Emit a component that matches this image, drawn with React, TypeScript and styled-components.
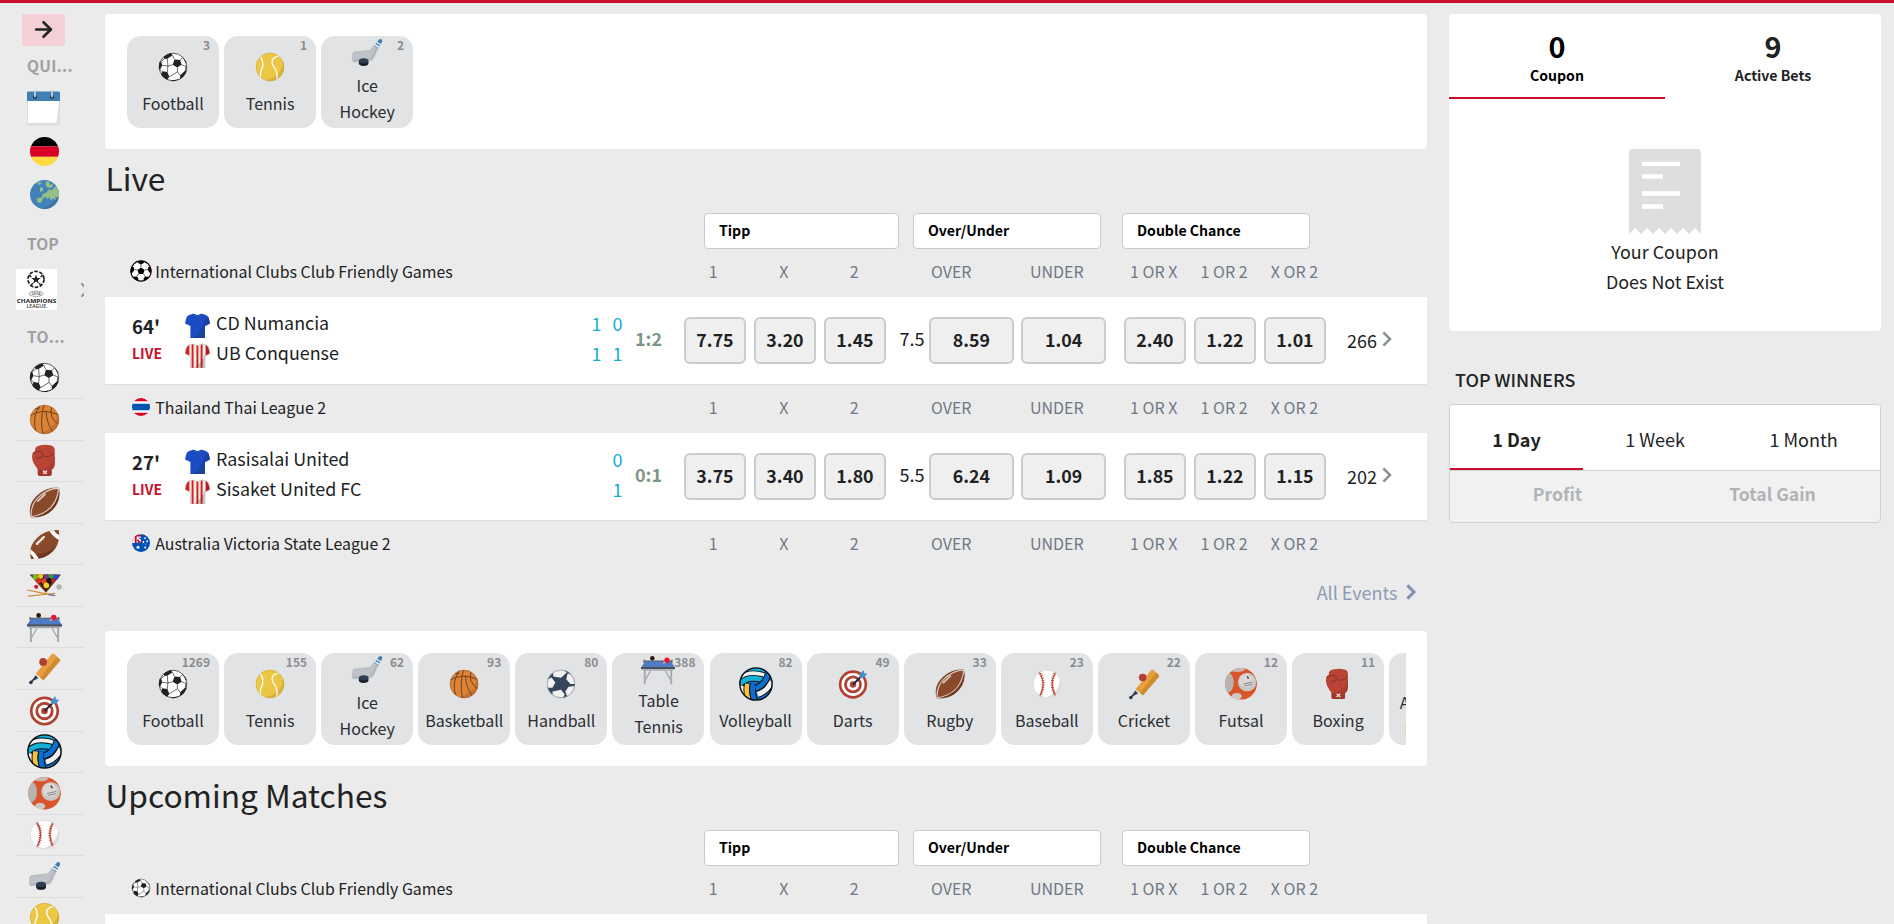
import React from 'react';
import styled, { createGlobalStyle } from 'styled-components';
import { ArrowRight } from 'lucide-react';

const RED = '#c8102e';

const GlobalStyle = createGlobalStyle`
  *, *::before, *::after { box-sizing: border-box; }
  html, body { margin: 0; background: #ebebeb; overflow: hidden; }
  body {
    font-family: 'Noto Sans CJK SC', 'Open Sans', sans-serif;
    font-size: 16px;
    color: #212223;
  }
  svg { display: block; flex: none; }
`;

/* ---------- icons ---------- */

type IconProps = { size?: number };

const Svg = ({ size = 35, children }: IconProps & { children: React.ReactNode }) => (
  <svg width={size} height={size} viewBox="0 0 36 36">
    {children}
  </svg>
);

const clip = (id: string, r = 15) => (
  <clipPath id={id}>
    <circle cx="18" cy="18" r={r} />
  </clipPath>
);

const BallIcon = ({ size, ink, id }: IconProps & { ink: string; id: string }) => (
  <Svg size={size}>
    {clip(id)}
    <circle cx="18" cy="18" r="15" fill="#fff" />
    <g clipPath={`url(#${id})`}>
      <path d="M26 31 Q33 24 32 12 L36 20 L30 34 L14 34 Q22 34 26 31" fill="#d9dadb" />
      <g fill={ink}>
        <path d="M19.5 10 L25.5 10.6 L27.2 15.6 L22.5 18.6 L17.7 15.6z" />
        <path d="M8 7 L15.5 3 L17.5 5.6 L12 9.2 L9 9.6z" />
        <path d="M2 13 L5.4 11.8 L6.6 16.2 L4.4 20.6 L2 21z" />
        <path d="M6.4 22.6 L12 23.4 L14.2 28.4 L11.6 32 L5 28z" />
        <path d="M25.6 26.8 L31 21.6 L34 22 L30 31 L25.4 31z" />
        <path d="M16 32.2 L22 31.6 L21 34 L15 34z" />
        <path d="M28.5 8 L33 13 L31.6 14z" />
      </g>
      <g stroke={ink} strokeWidth=".7" fill="none">
        <path d="M19.5 10 L17.5 5.6 M25.5 10.6 L28.6 8 M27.2 15.6 L31.6 17.4 L31 21.6 M22.5 18.6 L22.8 23 L25.6 26.8 M17.7 15.6 L12.6 17 L12 23.4 M12.6 17 L6.6 16.2 M12 9.2 L12.6 17 M22.8 23 L14.2 28.4 M25.4 31 L22 31.6 M9 9.6 L5.4 11.8 M4.4 20.6 L6.4 22.6" />
      </g>
    </g>
    <circle cx="18" cy="18" r="14.6" fill="none" stroke={ink} strokeWidth=".8" />
  </Svg>
);

const Football = ({ size }: IconProps) => <BallIcon size={size} ink="#222" id="fb" />;

const Handball = ({ size }: IconProps) => (
  <Svg size={size}>
    {clip('hb')}
    <g clipPath="url(#hb)">
      <circle cx="18" cy="18" r="15" fill="#35465a" />
      <g fill="#f1f1f1">
        <path d="M9 3 L20 2 L24 6 L18 11.5 L10 10z" />
        <path d="M2 14 L8 11 L12 16.5 L9 22 L2 22z" />
        <path d="M25 7 L32 9 L33 18 L28 18 L23.5 13z" />
        <path d="M26 21 L33 20 L31 28 L25 32 L22.5 26z" />
        <path d="M9 26 L18 24 L22 29 L19 34 L9 33z" />
      </g>
    </g>
    <circle cx="18" cy="18" r="14.6" fill="none" stroke="#8d949b" strokeWidth=".8" />
  </Svg>
);

const ClassicBall = ({ size }: IconProps) => (
  <Svg size={size}>
    {clip('cb', 17)}
    <circle cx="18" cy="18" r="16.6" fill="#fff" stroke="#000" strokeWidth="1.8" />
    <g clipPath="url(#cb)" fill="#000">
      <path d="M18 12.2 L23.8 16.5 L21.6 23 L14.4 23 L12.2 16.5z" />
      <path d="M11.5 1 L24.5 1 L22.5 5 L18 7.4 L13.5 5z" />
      <path d="M1 11 L6 11.5 L7 16.5 L4 21 L0 21z" />
      <path d="M35 11 L30 11.5 L29 16.5 L32 21 L36 21z" />
      <path d="M6 27.5 L11.5 27 L14 31 L12.5 35 L5 32z" />
      <path d="M30 27.5 L24.5 27 L22 31 L23.5 35 L31 32z" />
      <path d="M18 7 V12 M24 16.3 L29 15.5 M22 23 L25 27 M14 23 L11 27 M12 16.3 L7 15.5" stroke="#000" strokeWidth="1" />
    </g>
  </Svg>
);

const Basketball = ({ size }: IconProps) => (
  <Svg size={size}>
    {clip('bk')}
    <g clipPath="url(#bk)">
      <circle cx="18" cy="18" r="15" fill="#dc8338" />
      <path d="M32 10 Q31 26 14 32 L24 36 L36 26 L35 12z" fill="#c37232" />
      <g fill="none" stroke="#6b3f1d" strokeWidth="1">
        <path d="M3 14 Q16 6 32 13" />
        <path d="M8 6 Q14 10 12 3" />
        <path d="M12 5 Q5 17 9.5 31" />
        <path d="M17.5 3 Q13 18 16.5 33" />
        <path d="M19.5 9 Q20 22 27 31" />
        <path d="M25.5 5 Q22 16 32.5 23" />
      </g>
    </g>
    <circle cx="18" cy="18" r="14.7" fill="none" stroke="#a9622a" strokeWidth=".6" />
  </Svg>
);

const Tennis = ({ size }: IconProps) => (
  <Svg size={size}>
    {clip('tn')}
    <g clipPath="url(#tn)">
      <circle cx="18" cy="18" r="15" fill="#ecc645" />
      <path d="M32 12 Q31 27 14 32 L24 36 L36 26z" fill="#d8b23c" />
      <path d="M6.5 5 Q13 13 9 21 Q6.5 27 9 33" fill="none" stroke="#fff" strokeWidth="1.4" />
      <path d="M29 6 Q17.5 8 21 16 Q28 25 24.5 33" fill="none" stroke="#fff" strokeWidth="1.4" />
    </g>
    <circle cx="18" cy="18" r="14.7" fill="none" stroke="#cba93b" strokeWidth=".6" />
  </Svg>
);

const Hockey = ({ size }: IconProps) => (
  <Svg size={size}>
    <path d="M3 19 Q3 17 5.5 17 L19 15.5 Q22 15.2 23 13.5 L25.5 10 L30 12.5 L25 23.5 Q24 26 21 26 L4 27.5 Q2.4 27.6 2.5 25z" fill="#bfc3c9" stroke="#a8adb3" strokeWidth=".6" />
    <path d="M4 25.6 L21 24.1 Q23 23.6 24 21.6 L28.8 12.4" fill="none" stroke="#adb1b8" strokeWidth="1.2" />
    <path d="M25.4 10.2 L30.8 3.6 Q32 2.6 33.2 3.4 Q34.6 4 34 6 L30 13z" fill="#3c7db5" />
    <path d="M26.8 8.4 L31.6 11 L30.7 12.6 L25.6 9.9z M28.6 6.2 L32.8 8.6 L32.2 9.8 L27.8 7.3z" fill="#e8eef3" />
    <path d="M9.4 26 V29 Q9.6 31.6 14.4 31.7 Q19.4 31.6 19.5 29 V26z" fill="#17202c" />
    <ellipse cx="14.5" cy="26.2" rx="5" ry="2.7" fill="#2f3d50" />
  </Svg>
);

const Boxing = ({ size }: IconProps) => (
  <Svg size={size}>
    <path d="M11 25 H25.5 V32 Q25.5 34 23.5 34 H13 Q11 34 11 32z" fill="#a1372b" />
    <path d="M10 3.5 Q14 1.5 22 2 Q28.5 2.4 28.5 7 V20 Q28.5 26.5 25 27.5 H11.5 Q5 20 5.2 14 Q5.5 9 8.2 8.4 Q8 5 10 3.5z" fill="#b94435" />
    <path d="M28.4 13 Q26 24 15 27.5 H25 Q28.5 26.5 28.5 20z" fill="#a93d30" />
    <path d="M5.8 11 Q10 8 14.2 9 Q17.6 10.6 15.8 14 Q13 16.4 9.8 15 M17.5 13.6 Q25 15 28 10" fill="none" stroke="#7c2b22" strokeWidth=".9" />
    <path d="M16.5 28.4 l4 3.4 m0 -3.4 l-4 3.4" stroke="#f4d9d4" strokeWidth="1.4" />
  </Svg>
);

const Rugby = ({ size }: IconProps) => (
  <Svg size={size}>
    <path d="M32.6 3 Q35 16 26.5 25 Q18 34 4 32.8 Q1 20 10 11.5 Q19 2.4 32.6 3z" fill="#884a2a" stroke="#63341c" strokeWidth=".7" />
    <path d="M32.6 3 Q35 16 26.5 25 Q18 34 4 32.8 Q22 28 27 19 Q31 12 32.6 3z" fill="#70391f" />
    <path d="M32.4 3.2 Q32 14 25 22.5 Q17 31 4.2 32.6 Q3.6 20 12.5 12 Q21 4 32.4 3.2z" fill="none" stroke="#e5d7cd" strokeWidth="1.1" />
    <path d="M10.5 17 L19 9" stroke="#dccabe" strokeWidth="1.8" />
  </Svg>
);

const AmericanFootball = ({ size }: IconProps) => (
  <Svg size={size}>
    <clipPath id="af">
      <path d="M32.6 3 Q35 16 26.5 25 Q18 34 4 32.8 Q1 20 10 11.5 Q19 2.4 32.6 3z" />
    </clipPath>
    <g clipPath="url(#af)">
      <rect width="36" height="36" fill="#884a2a" />
      <path d="M34 14 Q28 26 10 28 L12 36 L36 30z" fill="#70391f" />
      <path d="M22 2 Q25 9 34.5 14.5 L34 9 Q29 7 27 2z M1 21 Q8 25 13 33.5 L8 34 Q6 29 2 27z" fill="#fff" />
    </g>
    <path d="M9.5 18 L18 9.6" stroke="#fff" strokeWidth="2" />
    <path d="M9 15.6 l3 3 M11.6 13 l3 3 M14.2 10.4 l3 3" stroke="#d9c5b8" strokeWidth=".8" />
  </Svg>
);

const Billiards = ({ size }: IconProps) => (
  <Svg size={size}>
    <path d="M2.6 6.6 H35 L19.5 25.4z" fill="#5b3114" />
    <path d="M6.5 8 H31.5 L19.4 22.5z" fill="#2c1a10" />
    <circle cx="8.6" cy="9.3" r="2.8" fill="#7fb82c" />
    <circle cx="14" cy="8.6" r="2.6" fill="#e9c71c" />
    <circle cx="20" cy="8.8" r="2.7" fill="#6d3c88" />
    <circle cx="25" cy="8.8" r="2.6" fill="#3f9c3c" />
    <circle cx="29.6" cy="9.2" r="2.8" fill="#2d49c9" />
    <circle cx="12" cy="13.2" r="2.7" fill="#e02c20" />
    <circle cx="17.4" cy="13.6" r="2.8" fill="#e54420" />
    <circle cx="23" cy="13" r="2.6" fill="#141414" />
    <circle cx="26.8" cy="13" r="2.2" fill="#c82020" />
    <circle cx="19.8" cy="17.8" r="2.9" fill="#eed22a" />
    <circle cx="9.5" cy="19.4" r="2.1" fill="#dd1f2b" />
    <circle cx="33" cy="19.6" r="2.8" fill="#b5b5b5" />
    <path d="M0 22.6 L15 25.6 L28 28" stroke="#d8892a" strokeWidth="1.2" fill="none" />
    <path d="M1 29 L29 26" stroke="#c98e45" strokeWidth="1.2" />
    <path d="M22 27.4 L29 28.4" stroke="#6b6cae" strokeWidth="1.2" />
  </Svg>
);

const TableTennis = ({ size }: IconProps) => (
  <Svg size={size}>
    <path d="M4 18 V33 M32 18 V33" stroke="#a5a8ac" strokeWidth="2" />
    <path d="M5 28 L10 19 M31 28 L26 19" stroke="#a5a8ac" strokeWidth="1.4" />
    <path d="M4.5 8.5 H31.5 L36 15.5 H0z" fill="#4f7cc4" />
    <path d="M3 8.5 H33" stroke="#5b6470" strokeWidth="1.2" />
    <path d="M3.2 7.2 V10.5 M32.8 7.2 V10.5" stroke="#444" strokeWidth="1" />
    <rect y="14.8" width="36" height="2.3" fill="#4a515e" />
    <path d="M2 18 H34" stroke="#a5a8ac" strokeWidth="1.4" />
    <circle cx="12" cy="5.6" r="2.4" fill="#2a1512" />
    <circle cx="27.5" cy="7.6" r="2.8" fill="#ee1238" />
    <path d="M25.6 9.4 L23.6 11" stroke="#e9a7a0" strokeWidth="1.4" />
    <circle cx="19" cy="5.3" r="1" fill="#f2dc92" />
  </Svg>
);

const Cricket = ({ size }: IconProps) => (
  <Svg size={size}>
    <path d="M9 23.5 L25.6 3.2 Q26.6 2 28 3.2 L33.6 8.4 Q34.6 9.4 33.6 10.6 L17 30z" fill="#e8a03c" />
    <path d="M30.8 5.8 L33.6 8.4 Q34.6 9.4 33.6 10.6 L17 30 L13.8 27.4z" fill="#cf8b30" />
    <path d="M9 25 L11.6 28 L6.6 30.6 L4.8 33.6 L2.4 32 L5.4 29.6z" fill="#2f3f52" />
    <circle cx="4" cy="32.4" r="1.8" fill="#24384c" />
    <circle cx="16.6" cy="11.2" r="4" fill="#b23f33" />
  </Svg>
);

const Darts = ({ size }: IconProps) => (
  <Svg size={size}>
    <circle cx="18" cy="18.5" r="15" fill="#b04133" />
    <circle cx="18" cy="18.5" r="12.2" fill="#fff" />
    <circle cx="18" cy="18.5" r="9.4" fill="#b04133" />
    <circle cx="18" cy="18.5" r="6.5" fill="#fff" />
    <circle cx="18" cy="18.5" r="3.4" fill="#b04133" />
    <path d="M18 18.5 L27 9.6" stroke="#1d2733" strokeWidth="2" />
    <path d="M24.6 10.6 L25.8 6.4 L29.4 3.4 L29.8 6.6 L33.2 7 L30 10.8 L26 11.8z" fill="#4491d0" />
  </Svg>
);

const VOLLEY_BANDS: [string, string][] = [
  ['M9 3 Q20 1 32 9', '#13b1da'],
  ['M2 11.5 Q13 3.5 30 10.5', '#efefef'],
  ['M1 18 Q9 9 25 13.5', '#13b1da'],
  ['M3.5 20 Q1.5 26 4 33', '#efefef'],
  ['M9 18 Q7 26 10.5 36', '#f8c33c'],
  ['M15 18 Q13 27 17 37', '#0a6fd0'],
  ['M21 34.6 Q31 32 36 22', '#0a6fd0'],
  ['M19.5 29 Q30 26 34.5 15', '#efefef'],
  ['M17.5 22.6 Q27 20 31 7.5', '#0a6fd0'],
];

const Volleyball = ({ size }: IconProps) => (
  <Svg size={size}>
    {clip('vb', 17)}
    <g clipPath="url(#vb)" fill="none">
      <circle cx="18" cy="18" r="17" fill="#0a6fd0" />
      {VOLLEY_BANDS.map(([d, color]) => (
        <g key={d}>
          <path d={d} stroke="#0a0a0a" strokeWidth="7.2" />
          <path d={d} stroke={color} strokeWidth="5.2" />
        </g>
      ))}
    </g>
    <circle cx="18" cy="18" r="17.1" fill="none" stroke="#0a0a0a" strokeWidth="1.5" />
  </Svg>
);

const Futsal = ({ size }: IconProps) => (
  <Svg size={size}>
    {clip('fs', 17)}
    <g clipPath="url(#fs)">
      <circle cx="18" cy="17.5" r="17" fill="#d9532b" />
      <ellipse cx="4.5" cy="16.5" rx="5.8" ry="10.5" fill="#b9b3af" />
      <circle cx="24.5" cy="16" r="9.8" fill="#c9c5c2" />
      <circle cx="23.5" cy="14.6" r="7.2" fill="#dbd8d6" />
      <ellipse cx="14" cy="2.4" rx="8" ry="3" fill="#cbb9b1" />
      <ellipse cx="13.5" cy="31" rx="5.2" ry="3.6" fill="#cfc9c5" />
      <path d="M30 33 L35 27" stroke="#c6bcb6" strokeWidth="4" />
      <path d="M20.5 18 L30 16 M21.4 20 L29.6 18.2" stroke="#8b8590" strokeWidth="1.1" />
      <path d="M24.6 10 L26 12.4" stroke="#443f55" strokeWidth="1.6" />
    </g>
  </Svg>
);

const Baseball = ({ size }: IconProps) => (
  <Svg size={size}>
    {clip('bs')}
    <g clipPath="url(#bs)">
      <circle cx="18" cy="18" r="15" fill="#fff" />
      <path d="M32 14 Q30 27 18 32 L26 36 L36 26z" fill="#e0e0e0" />
      <g fill="none" stroke="#bf4238">
        <path d="M9.5 5 Q18 17 10 31.5 M27.5 5 Q19.5 17 27.5 31.5" strokeWidth="1.2" />
        <path d="M9.5 5 Q18 17 10 31.5 M27.5 5 Q19.5 17 27.5 31.5" strokeWidth="3" strokeDasharray="1 1.4" />
      </g>
    </g>
    <circle cx="18" cy="18" r="14.7" fill="none" stroke="#cfcfcf" strokeWidth=".7" />
  </Svg>
);

const Calendar = () => (
  <svg width="33" height="36" viewBox="0 0 33 36">
    <path d="M0 2 H33 V34 Q33 35.5 31.5 35.5 H1.5 Q0 35.5 0 34z" fill="#dcdcdc" />
    <path d="M1 11 H32 V14 L29.5 33 H1z" fill="#fff" />
    <path d="M0 3 Q0 1.6 1.5 1.6 H31.5 Q33 1.6 33 3 V11 H0z" fill="#4080b5" />
    <circle cx="8" cy="7" r="2" fill="#26364a" />
    <circle cx="25" cy="7" r="2" fill="#26364a" />
    <path d="M8 0.5 V6.6 M25 0.5 V6.6" stroke="#c9ced2" strokeWidth="1.8" strokeLinecap="round" />
  </svg>
);

const Germany = () => (
  <svg width="29" height="29" viewBox="0 0 29 29">
    <clipPath id="de"><circle cx="14.5" cy="14.5" r="14.5" /></clipPath>
    <g clipPath="url(#de)">
      <rect width="29" height="9.4" fill="#000" />
      <rect y="9.4" width="29" height="10.4" fill="#d80027" />
      <rect y="19.8" width="29" height="9.4" fill="#ffda44" />
    </g>
  </svg>
);

const Globe = () => (
  <svg width="29" height="29" viewBox="0 0 29 29">
    <clipPath id="gl"><circle cx="14.5" cy="14.5" r="14.5" /></clipPath>
    <g clipPath="url(#gl)">
      <rect width="29" height="29" fill="#4183b8" />
      <path d="M29 10 Q28 24 10 29 H29z" fill="#3a76a8" />
      <g fill="#96bf85">
        <path d="M7 3 L10 1.5 L11.5 3.5 L9 5z M10 7.5 L12.5 7 L13.4 10.5 L10 12z M15.5 2 L19 1 L20 5 L22.5 3.4 L23 7 L18.5 8 L16 6z" />
        <path d="M6.5 18.6 L11.6 17.4 L13 14 L17 12.2 L18 9.4 L22 10 L26 6 L29 11 V17.5 L25 17 L26 20 L23 18.4 L21 20.4 L19 16.4 L18 19.4 L15.4 16.4 L12.8 18.6 L12 22 L8 23z" />
      </g>
    </g>
  </svg>
);

const ChampionsLeague = () => (
  <svg width="41" height="41" viewBox="0 0 41 41">
    <rect width="41" height="41" fill="#fff" />
    <circle cx="20" cy="10.3" r="8" fill="none" stroke="#222" strokeWidth="1.8" strokeDasharray="3.6 1.5" />
    <path d="M20 5.6 L21.2 9 L24.8 9 L21.9 11.2 L23 14.8 L20 12.6 L17 14.8 L18.1 11.2 L15.2 9 L18.8 9z" fill="#222" />
    <path d="M13 6 L15.5 8 M27 6 L24.5 8 M15 17 L16.6 14 M25 17 L23.4 14" stroke="#222" strokeWidth="1.4" />
    <ellipse cx="20" cy="24.8" rx="7" ry="2.6" fill="none" stroke="#666" strokeWidth=".6" />
    <text x="20" y="26.3" fontSize="4" fontWeight="600" fontStyle="italic" textAnchor="middle" fill="#555" fontFamily="Open Sans, sans-serif">UEFA</text>
    <text x="20.5" y="33.8" fontSize="6" fontWeight="700" textAnchor="middle" textLength="39.5" lengthAdjust="spacingAndGlyphs" fill="#222" fontFamily="Open Sans, sans-serif">CHAMPIONS</text>
    <text x="21" y="38.5" fontSize="4.6" fontWeight="600" textAnchor="middle" textLength="21" lengthAdjust="spacingAndGlyphs" fill="#333" fontFamily="Open Sans, sans-serif">LEAGUE.</text>
  </svg>
);

const Thailand = () => (
  <svg width="18" height="18" viewBox="0 0 18 18">
    <clipPath id="th"><circle cx="9" cy="9" r="9" /></clipPath>
    <g clipPath="url(#th)">
      <rect width="18" height="18" fill="#f4f4f4" />
      <rect width="18" height="3.2" fill="#d80027" />
      <rect y="5.8" width="18" height="6.4" fill="#0052b4" />
      <rect y="14.8" width="18" height="3.2" fill="#d80027" />
    </g>
  </svg>
);

const Australia = () => (
  <svg width="18" height="18" viewBox="0 0 18 18">
    <clipPath id="au"><circle cx="9" cy="9" r="9" /></clipPath>
    <g clipPath="url(#au)">
      <rect width="18" height="18" fill="#0052b4" />
      <path d="M0 0 H9 V9 H0z" fill="#eff0f3" />
      <path d="M9 2.6 H4.6 V9 H2.8 V2 Q6 -1 9 .8z M5.6 5 L9.4 8.6 L8.4 9.4 L5 6.4z" fill="#d80027" />
      <path d="M6.2 3.8 H9 V5.6z M5.6 7 L7.6 9 H5.6z" fill="#0052b4" />
      <g fill="#fff">
        <circle cx="6" cy="13.2" r="1.5" />
        <circle cx="13" cy="4.2" r=".9" />
        <circle cx="11.4" cy="8" r=".9" />
        <circle cx="15.2" cy="7.2" r=".9" />
        <circle cx="13.2" cy="13.6" r="1" />
        <circle cx="14" cy="10" r=".5" />
      </g>
    </g>
  </svg>
);

const SHIRT = 'M7.5 1 Q12.5 4 17.5 1 L21 2 Q23.5 3 24 6 L25 10.6 L20 13 V25 H5.4 V13 L0 10.6 L1 6 Q1.6 3 4 2z';

const BlueShirt = () => (
  <svg width="25" height="25" viewBox="0 0 25 25">
    <path d={SHIRT} fill="#1b4cc4" />
    <path d="M19.6 7 Q18 18 8 25 H20 V13 L25 10.6 L23.4 4z" fill="#1d419e" />
    <path d="M7.5 1 Q12.5 4 17.5 1" fill="none" stroke="#143a94" strokeWidth="1" />
  </svg>
);

const StripedShirt = () => (
  <svg width="25" height="25" viewBox="0 0 25 25">
    <clipPath id="sh"><path d={SHIRT} /></clipPath>
    <g clipPath="url(#sh)">
      <rect width="25" height="25" fill="#f5f3f2" />
      <path d="M0 0 H4.4 V13 H0z M6.6 0 H8.6 V25 H6.6z M11.4 0 H13.4 V25 H11.4z M15.6 0 H17.6 V25 H15.6z" fill="#d8221f" />
      <path d="M20.6 0 H25 V13 H20.6z" fill="#b31d22" />
      <path d="M19.6 10 Q18 19 9 25 H20.4z" fill="#4a2020" opacity=".22" />
    </g>
    <path d={SHIRT} fill="none" stroke="#b9a8a6" strokeWidth=".5" />
  </svg>
);

const Receipt = () => (
  <svg width="72" height="85" viewBox="0 0 72 85">
    <path d="M4 0 H68 Q72 0 72 4 V85 L66 79 L60 85 L54 79 L48 85 L42 79 L36 85 L30 79 L24 85 L18 79 L12 85 L6 79 L0 85 V4 Q0 0 4 0z" fill="#dedede" />
    <path d="M13 12.7 H51 V17 H13z M13 25.2 H34 V29.8 H13z M13 42.2 H51 V46.8 H13z M13 55.2 H34 V59.8 H13z" fill="#fff" />
  </svg>
);

const Chevron = ({ color, w = 2.6 }: { color: string; w?: number }) => (
  <svg width="10" height="16" viewBox="0 0 10 16">
    <path d="M1.4 1.4 L8 8 L1.4 14.6" fill="none" stroke={color} strokeWidth={w} />
  </svg>
);

/* ---------- page ---------- */

const Page = styled.div`
  height: 924px;
  border-top: 3px solid ${RED};
  display: flex;
  align-items: flex-start;
  overflow: hidden;
`;

const Sidebar = styled.aside`
  width: 84px;
  height: 921px;
  padding: 11px 0 0 16px;
  overflow: hidden;
  flex: none;
`;

const ExpandButton = styled.button`
  display: flex;
  align-items: center;
  justify-content: center;
  width: 43px;
  height: 32px;
  margin: 0 0 0 6px;
  padding: 0 1px 2px 0;
  border: 0;
  border-radius: 3px;
  background: #f5cfd6;
  color: #212223;
`;

const SideLabel = styled.div<{ $top: number; $bottom: number; $spread?: boolean }>`
  margin: ${p => p.$top}px 0 ${p => p.$bottom}px 11px;
  font-size: 15.6px;
  font-weight: 700;
  line-height: 24px;
  letter-spacing: ${p => (p.$spread ? '0.3px' : 'normal')};
  color: #a0a0a0;
  white-space: nowrap;
`;

const QuickLinks = styled.div`
  width: 56px;
  display: flex;
  flex-direction: column;
  align-items: center;
  gap: 14px;

  & > :first-child { margin: 0 1px -3px 0; }
`;

const TopLeague = styled.div`
  display: flex;
  align-items: center;
  gap: 23px;
`;

const SportRow = styled.div`
  height: 41.55px;
  padding-left: 11px;
  display: flex;
  align-items: center;
  border-bottom: 1px solid #dbdce2;
`;

const Main = styled.main`
  width: 1322px;
  margin: 11px 0 0 21px;
  flex: none;
`;

const TileCard = styled.section`
  height: 135px;
  padding: 22px 21px 0 22px;
  background: #fff;
  border-radius: 4px;
`;

const TileStrip = styled.div`
  display: flex;
  gap: 5.1px;
  overflow: hidden;
`;

const Tile = styled.div<{ $inset: number }>`
  position: relative;
  flex: none;
  width: 92px;
  height: 91.5px;
  padding-top: ${p => p.$inset}px;
  display: flex;
  flex-direction: column;
  align-items: center;
  border-radius: 14px;
  background: #e2e3e5;
`;

const TileCount = styled.span`
  position: absolute;
  top: 1px;
  right: 9px;
  font-size: 12px;
  font-weight: 700;
  line-height: 16px;
  color: #8b8d90;
`;

const TileLabel = styled.span<{ $gap: number }>`
  margin-top: ${p => p.$gap}px;
  line-height: 26px;
  text-align: center;
  white-space: pre;
  color: #2b2d30;
`;

const Title = styled.h2`
  margin: 0;
  height: 64px;
  padding: 4px 0 0 0.5px;
  font-size: 31.7px;
  font-weight: 400;
  line-height: 48px;
`;

const MarketBar = styled.div`
  display: flex;
  padding-left: 599px;
`;

const MarketSelect = styled.div<{ $w: number; $gap: number }>`
  width: ${p => p.$w}px;
  height: 36px;
  margin-right: ${p => p.$gap}px;
  padding-left: 14px;
  border: 1px solid #c8cacc;
  border-radius: 4px;
  background: #fff;
  color: #000;
  font-size: 14.1px;
  font-weight: 700;
  line-height: 32px;
`;

const LeagueRow = styled.div`
  display: flex;
  align-items: center;
  height: 48px;
  padding-bottom: 4px;
`;

const LeagueIcon = styled.span`
  width: 24px;
  margin-left: 23.5px;
  display: flex;
  justify-content: center;
`;

const LeagueName = styled.span`
  width: 525.5px;
  padding: 1px 0 0 2.8px;
  font-size: 15.9px;
  line-height: 25px;
`;

const Outcomes = styled.div<{ $cell: number; $n: number; $gap: number }>`
  display: grid;
  grid-template-columns: repeat(${p => p.$n}, ${p => p.$cell}px);
  margin-right: ${p => p.$gap}px;
  line-height: 24px;
  text-align: center;
  color: #6f7985;
`;

const MatchRow = styled.div`
  display: grid;
  grid-template-columns: 53px 401px 21px 21px 56px 202px 43px 177px 18px 202px auto;
  align-items: center;
  height: 88px;
  padding-left: 27px;
  background: #fff;
  border-bottom: 1px solid #dcdde0;
`;

const Clock = styled.div`
  display: flex;
  flex-direction: column;
  margin-top: -3px;
  font-size: 18.6px;
  font-weight: 700;
  line-height: 28px;
`;

const LiveTag = styled.span`
  font-size: 14px;
  line-height: 26px;
  color: ${RED};
`;

const Teams = styled.div`
  display: flex;
  flex-direction: column;
  margin-top: -5px;
`;

const Team = styled.div`
  display: flex;
  align-items: center;
  gap: 6px;
  height: 30px;
  font-size: 17.9px;
  line-height: 30px;
`;

const TeamName = styled.span`
  padding-bottom: 1.5px;
`;

const ShirtBox = styled.span`
  display: flex;
  padding-top: 4px;
`;

const Period = styled.div`
  margin-top: -5px;
  font-size: 18px;
  line-height: 30px;
  text-align: center;
  color: #14aed0;
  white-space: pre;
`;

const Total = styled.div`
  padding: 0 0 5px 7px;
  font-size: 18px;
  font-weight: 700;
  line-height: 30px;
  color: #7f9684;
`;

const Odds = styled.div<{ $n: number; $gap: number }>`
  display: grid;
  grid-template-columns: repeat(${p => p.$n}, 1fr);
  gap: ${p => p.$gap}px;
`;

const Odd = styled.button`
  height: 47px;
  padding: 0 0 3px;
  border: 2px solid #c9cdce;
  border-radius: 6px;
  background: #efefef;
  color: #212223;
  font: 700 17.8px/38px 'Noto Sans CJK SC', sans-serif;
  text-align: center;
`;

const LineValue = styled.div`
  padding: 0 4.5px 5px 0;
  font-size: 18px;
  line-height: 30px;
  text-align: right;
`;

const More = styled.div`
  display: flex;
  align-items: center;
  gap: 5px;
  padding: 0 0 2px 21px;
  font-size: 18px;
  line-height: 30px;
`;

const MoreChevron = styled.span`
  display: flex;
  padding-bottom: 1px;
`;

const AllEvents = styled.div`
  display: flex;
  align-items: center;
  justify-content: flex-end;
  gap: 8px;
  height: 62px;
  padding: 0 11.5px 16px 0;
  font-size: 18px;
  line-height: 30px;
  color: #8e9bb3;
`;

const Right = styled.aside`
  width: 432px;
  margin: 11px 0 0 22px;
  flex: none;
`;

const CouponCard = styled.section`
  height: 317px;
  border-radius: 4px;
  background: #fff;
  overflow: hidden;
`;

const CouponTabs = styled.div`
  display: flex;
`;

const CouponTab = styled.div<{ $active?: boolean }>`
  flex: 1;
  height: 85px;
  padding-top: 13.5px;
  display: flex;
  flex-direction: column;
  align-items: center;
  border-bottom: 2px solid ${p => (p.$active ? RED : 'transparent')};
  color: ${p => (p.$active ? '#000' : '#212223')};
`;

const CouponCount = styled.span`
  font-size: 28.8px;
  font-weight: 700;
  line-height: 36px;
`;

const CouponLabel = styled.span`
  font-size: 14.1px;
  font-weight: 700;
  line-height: 23px;
`;

const CouponEmpty = styled.div`
  padding-top: 50px;
  display: flex;
  flex-direction: column;
  align-items: center;
  font-size: 17.9px;
  line-height: 30px;
`;

const EmptyText = styled.p`
  margin: 1.5px 0 0;
  text-align: center;
`;

const WinnersTitle = styled.h3`
  margin: 33px 0 10px 6px;
  font-size: 17.9px;
  font-weight: 500;
  line-height: 30px;
`;

const WinnersCard = styled.section`
  height: 119px;
  border: 1px solid #cfd0d1;
  border-radius: 4px;
  background: #f1f1f1;
  overflow: hidden;
`;

const RangeTabs = styled.div`
  display: grid;
  grid-template-columns: 133px 144px 1fr;
  height: 66px;
  background: #fff;
  border-bottom: 1px solid #cfd0d1;
`;

const RangeTab = styled.div<{ $active?: boolean }>`
  padding-top: 19px;
  font-size: 18px;
  font-weight: ${p => (p.$active ? 700 : 400)};
  line-height: 30px;
  text-align: center;
  border-bottom: 2px solid ${p => (p.$active ? RED : 'transparent')};
`;

const WinnersHead = styled.div`
  display: grid;
  grid-template-columns: 1fr 1fr;
  padding-top: 8px;
  font-size: 17.6px;
  font-weight: 700;
  line-height: 30px;
  text-align: center;
  color: #b0b4b8;
`;

/* ---------- data ---------- */

type Icon = React.ComponentType<IconProps>;
type Sport = { icon: Icon; label: string; count: number };

const liveSports: Sport[] = [
  { icon: Football, label: 'Football', count: 3 },
  { icon: Tennis, label: 'Tennis', count: 1 },
  { icon: Hockey, label: 'Ice\nHockey', count: 2 },
];

const allSports: Sport[] = [
  { icon: Football, label: 'Football', count: 1269 },
  { icon: Tennis, label: 'Tennis', count: 155 },
  { icon: Hockey, label: 'Ice\nHockey', count: 62 },
  { icon: Basketball, label: 'Basketball', count: 93 },
  { icon: Handball, label: 'Handball', count: 80 },
  { icon: TableTennis, label: 'Table\nTennis', count: 388 },
  { icon: Volleyball, label: 'Volleyball', count: 82 },
  { icon: Darts, label: 'Darts', count: 49 },
  { icon: Rugby, label: 'Rugby', count: 33 },
  { icon: Baseball, label: 'Baseball', count: 23 },
  { icon: Cricket, label: 'Cricket', count: 22 },
  { icon: Futsal, label: 'Futsal', count: 12 },
  { icon: Boxing, label: 'Boxing', count: 11 },
  { icon: AmericanFootball, label: 'American\nFootball', count: 9 },
];

const sideSports: Icon[] = [
  Football, Basketball, Boxing, Rugby, AmericanFootball, Billiards, TableTennis,
  Cricket, Darts, Volleyball, Futsal, Baseball, Hockey, Tennis,
];

type MatchData = {
  minute: string; home: string; away: string; periods: string[]; total: string;
  tipp: string[]; line: string; ou: string[]; dc: string[]; more: number;
};

const matches: MatchData[] = [
  { minute: "64'", home: 'CD Numancia', away: 'UB Conquense', periods: ['1\n1', '0\n1'], total: '1:2', tipp: ['7.75', '3.20', '1.45'], line: '7.5', ou: ['8.59', '1.04'], dc: ['2.40', '1.22', '1.01'], more: 266 },
  { minute: "27'", home: 'Rasisalai United', away: 'Sisaket United FC', periods: ['', '0\n1'], total: '0:1', tipp: ['3.75', '3.40', '1.80'], line: '5.5', ou: ['6.24', '1.09'], dc: ['1.85', '1.22', '1.15'], more: 202 },
];

/* ---------- parts ---------- */

const Tiles = ({ sports }: { sports: Sport[] }) => (
  <TileCard>
    <TileStrip>
      {sports.map(({ icon: SportIcon, label, count }) => {
        const tall = label.includes('\n');
        return (
          <Tile key={label} $inset={tall ? 0 : 13.5}>
            <TileCount>{count}</TileCount>
            <SportIcon size={34} />
            <TileLabel $gap={tall ? (label.startsWith('Table') ? -0.5 : 1.5) : 6.5}>{label}</TileLabel>
          </Tile>
        );
      })}
    </TileStrip>
  </TileCard>
);

const Markets = () => (
  <MarketBar>
    <MarketSelect $w={195} $gap={14}>Tipp</MarketSelect>
    <MarketSelect $w={188} $gap={21}>Over/Under</MarketSelect>
    <MarketSelect $w={188} $gap={0}>Double Chance</MarketSelect>
  </MarketBar>
);

const League = ({ icon, name }: { icon: React.ReactNode; name: string }) => (
  <LeagueRow>
    <LeagueIcon>{icon}</LeagueIcon>
    <LeagueName>{name}</LeagueName>
    <Outcomes $cell={70.5} $n={3} $gap={9}>
      <span>1</span><span>X</span><span>2</span>
    </Outcomes>
    <Outcomes $cell={105.5} $n={2} $gap={9}>
      <span>OVER</span><span>UNDER</span>
    </Outcomes>
    <Outcomes $cell={70.4} $n={3} $gap={0}>
      <span>1 OR X</span><span>1 OR 2</span><span>X OR 2</span>
    </Outcomes>
  </LeagueRow>
);

const OddGroup = ({ values, gap }: { values: string[]; gap: number }) => (
  <Odds $n={values.length} $gap={gap}>
    {values.map((v, i) => <Odd key={i}>{v}</Odd>)}
  </Odds>
);

const Match = ({ m }: { m: MatchData }) => (
  <MatchRow>
    <Clock>
      {m.minute}
      <LiveTag>LIVE</LiveTag>
    </Clock>
    <Teams>
      <Team><ShirtBox><BlueShirt /></ShirtBox><TeamName>{m.home}</TeamName></Team>
      <Team><ShirtBox><StripedShirt /></ShirtBox><TeamName>{m.away}</TeamName></Team>
    </Teams>
    <Period>{m.periods[0]}</Period>
    <Period>{m.periods[1]}</Period>
    <Total>{m.total}</Total>
    <OddGroup values={m.tipp} gap={8} />
    <LineValue>{m.line}</LineValue>
    <OddGroup values={m.ou} gap={7.5} />
    <span />
    <OddGroup values={m.dc} gap={8} />
    <More>{m.more}<MoreChevron><Chevron color="#8d9297" /></MoreChevron></More>
  </MatchRow>
);

export default function App() {
  return (
    <>
      <GlobalStyle />
      <Page>
        <Sidebar>
          <ExpandButton><ArrowRight size={25} strokeWidth={2.5} /></ExpandButton>
          <SideLabel $top={7} $bottom={13} $spread>QUI...</SideLabel>
          <QuickLinks>
            <Calendar />
            <Germany />
            <Globe />
          </QuickLinks>
          <SideLabel $top={22} $bottom={14}>TOP</SideLabel>
          <TopLeague>
            <ChampionsLeague />
            <Chevron color="#8d9297" w={2} />
          </TopLeague>
          <SideLabel $top={14} $bottom={9.6} $spread>TO...</SideLabel>
          {sideSports.map((SportIcon, i) => (
            <SportRow key={i}><SportIcon size={35} /></SportRow>
          ))}
        </Sidebar>

        <Main>
          <Tiles sports={liveSports} />
          <Title>Live</Title>
          <Markets />
          <League icon={<ClassicBall size={22} />} name="International Clubs Club Friendly Games" />
          <Match m={matches[0]} />
          <League icon={<Thailand />} name="Thailand Thai League 2" />
          <Match m={matches[1]} />
          <League icon={<Australia />} name="Australia Victoria State League 2" />
          <AllEvents>All Events<Chevron color="#8290ad" w={3} /></AllEvents>
          <Tiles sports={allSports} />
          <Title>Upcoming Matches</Title>
          <Markets />
          <League icon={<Football size={22} />} name="International Clubs Club Friendly Games" />
          <MatchRow />
        </Main>

        <Right>
          <CouponCard>
            <CouponTabs>
              <CouponTab $active>
                <CouponCount>0</CouponCount>
                <CouponLabel>Coupon</CouponLabel>
              </CouponTab>
              <CouponTab>
                <CouponCount>9</CouponCount>
                <CouponLabel>Active Bets</CouponLabel>
              </CouponTab>
            </CouponTabs>
            <CouponEmpty>
              <Receipt />
              <EmptyText>Your Coupon<br />Does Not Exist</EmptyText>
            </CouponEmpty>
          </CouponCard>
          <WinnersTitle>TOP WINNERS</WinnersTitle>
          <WinnersCard>
            <RangeTabs>
              <RangeTab $active>1 Day</RangeTab>
              <RangeTab>1 Week</RangeTab>
              <RangeTab>1 Month</RangeTab>
            </RangeTabs>
            <WinnersHead>
              <span>Profit</span>
              <span>Total Gain</span>
            </WinnersHead>
          </WinnersCard>
        </Right>
      </Page>
    </>
  );
}
